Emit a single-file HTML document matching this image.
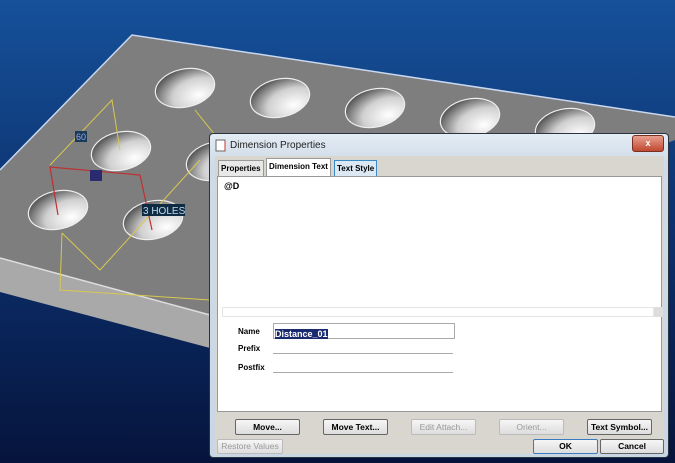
<!DOCTYPE html>
<html><head><style>
body{margin:0;width:675px;height:463px;overflow:hidden;font-family:"Liberation Sans",sans-serif;}
.dlg{position:absolute;left:209px;top:133px;width:460px;height:325px;background:linear-gradient(#e4ecf4,#cfdbe8 30px,#c9d6e4);border:1px solid #2a3440;box-sizing:border-box;border-radius:4px;}
.title{position:absolute;left:20px;top:6px;font-size:10px;color:#222;}
.close{position:absolute;right:4px;top:1px;width:30px;height:15px;background:linear-gradient(#e8a090,#c04830);border:1px solid #7a3020;border-radius:3px;color:#fff;font-size:9px;text-align:center;line-height:15px;font-weight:bold;}
.inner{position:absolute;left:5px;top:22px;width:449px;height:298px;background:#d9d6cf;}
.tab{position:absolute;top:4px;height:15px;font-size:8px;font-weight:bold;line-height:15px;border:1px solid #999;border-bottom:none;padding:0 2px;background:#e8e8e8;white-space:nowrap;}
.panel{position:absolute;left:2px;top:20px;width:445px;height:236px;background:#fff;border:1px solid #999;box-sizing:border-box;}
.lbl{position:absolute;left:20px;font-size:8px;font-weight:bold;}
.fld{position:absolute;left:55px;width:180px;height:14px;border-bottom:1px solid #aaa;}
.btn{position:absolute;height:14px;border:1px solid #666;background:linear-gradient(#f6f6f6,#ddd);font-size:8.5px;font-weight:bold;text-align:center;line-height:14px;border-radius:2px;}
.dis{color:#999;font-weight:normal;border-color:#bbb;}
</style></head><body>
<svg width="675" height="463" style="position:absolute;left:0;top:0">
<defs>
<linearGradient id="bg" x1="0" y1="0" x2="0" y2="1"><stop offset="0" stop-color="#16519a"/><stop offset="0.55" stop-color="#0b2d68"/><stop offset="1" stop-color="#06143c"/></linearGradient>
<radialGradient id="h" cx="0.7" cy="0.75" r="0.8"><stop offset="0" stop-color="#fff"/><stop offset="0.55" stop-color="#d0d0d0"/><stop offset="1" stop-color="#555"/></radialGradient>
</defs>
<rect width="675" height="463" fill="url(#bg)"/>
<polygon points="0,258 210,315 210,348 0,292" fill="#a9a9a9"/>
<polygon points="132,35 675,117 675,140 210,315 0,258 0,170" fill="#7e7e7e"/>
<polyline points="0,170 132,35 675,117" fill="none" stroke="#c8d8f0" stroke-width="1.5"/>
<line x1="0" y1="258" x2="210" y2="315" stroke="#ddd" stroke-width="1.5"/>
<g fill="url(#h)" stroke="#eee" stroke-width="1.2">
<ellipse cx="185" cy="88" rx="30" ry="19" transform="rotate(-12 185 88)"/>
<ellipse cx="280" cy="98" rx="30" ry="19" transform="rotate(-12 280 98)"/>
<ellipse cx="375" cy="108" rx="30" ry="19" transform="rotate(-12 375 108)"/>
<ellipse cx="470" cy="118" rx="30" ry="19" transform="rotate(-12 470 118)"/>
<ellipse cx="565" cy="128" rx="30" ry="19" transform="rotate(-12 565 128)"/>
<ellipse cx="121" cy="151" rx="30" ry="19" transform="rotate(-12 121 151)"/>
<ellipse cx="216" cy="161" rx="30" ry="19" transform="rotate(-12 216 161)"/>
<ellipse cx="58" cy="210" rx="30" ry="19" transform="rotate(-12 58 210)"/>
<ellipse cx="153" cy="220" rx="30" ry="19" transform="rotate(-12 153 220)"/>
</g>
<g stroke="#d8c850" fill="none" stroke-width="1">
<polyline points="50,165 112,100 120,150"/>
<polyline points="62,233 60,290 210,300"/>
<polyline points="62,233 100,270 200,160"/>
<line x1="195" y1="110" x2="215" y2="135"/>
</g>
<g stroke="#c03030" fill="none" stroke-width="1.2">
<polyline points="58,215 50,167 140,175 152,230"/>
</g>
<rect x="75" y="131" width="12" height="11" fill="#1a3a5a"/><text x="76" y="140" font-size="9" fill="#9ad">60</text>
<rect x="90" y="170" width="12" height="11" fill="#2a2a70"/>
<rect x="142" y="204" width="43" height="12" fill="#102a44"/><text x="143" y="214" font-size="10" fill="#bde">3 HOLES</text>
</svg>
<div class="dlg">
<svg style="position:absolute;left:5px;top:5px" width="12" height="13"><rect x="1" y="1" width="9" height="11" fill="#fff" stroke="#666"/><line x1="10" y1="2" x2="10" y2="12" stroke="#c33"/></svg>
<div class="title">Dimension Properties</div>
<div class="close">x</div>
<div class="inner">
<div class="tab" style="left:3px;">Properties</div>
<div class="tab" style="left:51px;top:2px;height:17px;background:#fff;">Dimension Text</div>
<div class="tab" style="left:119px;background:#dce9f5;border-color:#3a8ac8;">Text Style</div>
<div class="panel">
<div style="position:absolute;left:6px;top:4px;font-size:9px;font-weight:bold">@D</div>
<div style="position:absolute;left:4px;top:130px;width:430px;height:8px;border:1px solid #e4e4e4"></div>
<div style="position:absolute;left:436px;top:130px;width:9px;height:10px;background:#ddd"></div>
<div class="lbl" style="top:150px">Name</div>
<div class="fld" style="top:146px;border:1px solid #aaa;"><span style="background:#1a2a70;color:#fff;font-size:9px;font-weight:bold;margin:1px;display:inline-block">Distance_01</span></div>
<div class="lbl" style="top:167px">Prefix</div>
<div class="fld" style="top:162px"></div>
<div class="lbl" style="top:186px">Postfix</div>
<div class="fld" style="top:181px"></div>
</div>
<div class="btn" style="left:20px;top:263px;width:63px">Move...</div>
<div class="btn" style="left:108px;top:263px;width:63px">Move Text...</div>
<div class="btn dis" style="left:196px;top:263px;width:63px">Edit Attach...</div>
<div class="btn dis" style="left:284px;top:263px;width:63px">Orient...</div>
<div class="btn" style="left:372px;top:263px;width:63px">Text Symbol...</div>
<div class="btn dis" style="left:2px;top:283px;width:64px;height:13px;line-height:13px">Restore Values</div>
<div class="btn" style="left:318px;top:283px;width:63px;height:13px;line-height:13px;border-color:#3a7ac0;">OK</div>
<div class="btn" style="left:385px;top:283px;width:62px;height:13px;line-height:13px">Cancel</div>
</div>
</div>
</body></html>
